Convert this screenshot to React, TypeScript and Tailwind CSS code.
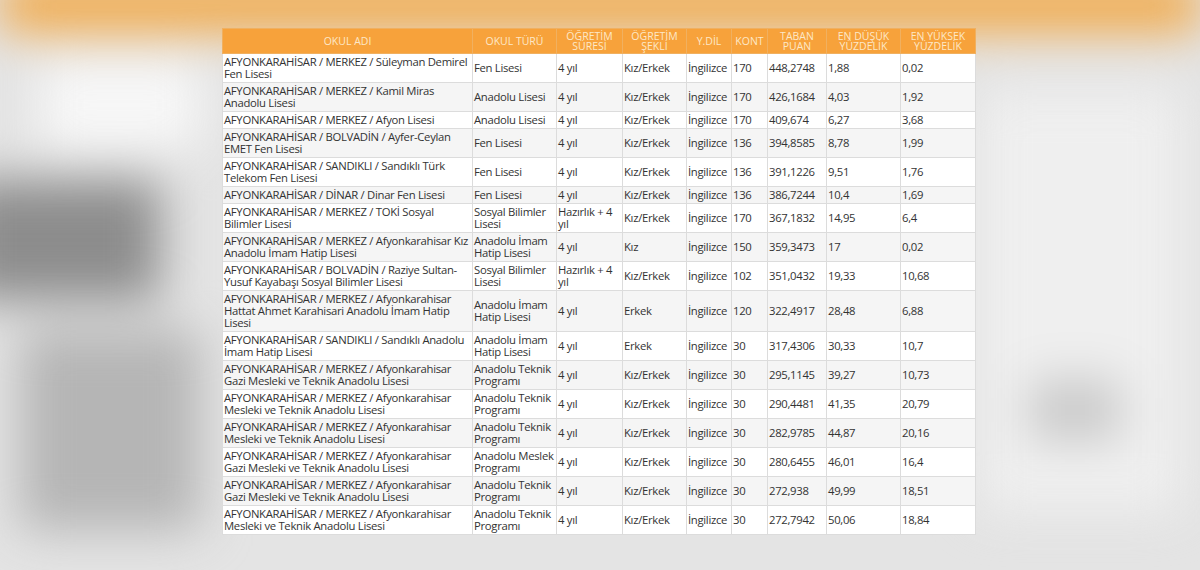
const rows: string[][] = [
  ["AFYONKARAHİSAR / MERKEZ / Süleyman Demirel Fen Lisesi", "Fen Lisesi", "4 yıl", "Kız/Erkek", "İngilizce", "170", "448,2748", "1,88", "0,02"],
  ["AFYONKARAHİSAR / MERKEZ / Kamil Miras Anadolu Lisesi", "Anadolu Lisesi", "4 yıl", "Kız/Erkek", "İngilizce", "170", "426,1684", "4,03", "1,92"],
  ["AFYONKARAHİSAR / MERKEZ / Afyon Lisesi", "Anadolu Lisesi", "4 yıl", "Kız/Erkek", "İngilizce", "170", "409,674", "6,27", "3,68"],
  ["AFYONKARAHİSAR / BOLVADİN / Ayfer-Ceylan EMET Fen Lisesi", "Fen Lisesi", "4 yıl", "Kız/Erkek", "İngilizce", "136", "394,8585", "8,78", "1,99"],
  ["AFYONKARAHİSAR / SANDIKLI / Sandıklı Türk Telekom Fen Lisesi", "Fen Lisesi", "4 yıl", "Kız/Erkek", "İngilizce", "136", "391,1226", "9,51", "1,76"],
  ["AFYONKARAHİSAR / DİNAR / Dinar Fen Lisesi", "Fen Lisesi", "4 yıl", "Kız/Erkek", "İngilizce", "136", "386,7244", "10,4", "1,69"],
  ["AFYONKARAHİSAR / MERKEZ / TOKİ Sosyal Bilimler Lisesi", "Sosyal Bilimler Lisesi", "Hazırlık + 4 yıl", "Kız/Erkek", "İngilizce", "170", "367,1832", "14,95", "6,4"],
  ["AFYONKARAHİSAR / MERKEZ / Afyonkarahisar Kız Anadolu İmam Hatip Lisesi", "Anadolu İmam Hatip Lisesi", "4 yıl", "Kız", "İngilizce", "150", "359,3473", "17", "0,02"],
  ["AFYONKARAHİSAR / BOLVADİN / Raziye Sultan-Yusuf Kayabaşı Sosyal Bilimler Lisesi", "Sosyal Bilimler Lisesi", "Hazırlık + 4 yıl", "Kız/Erkek", "İngilizce", "102", "351,0432", "19,33", "10,68"],
  ["AFYONKARAHİSAR / MERKEZ / Afyonkarahisar Hattat Ahmet Karahisari Anadolu İmam Hatip Lisesi", "Anadolu İmam Hatip Lisesi", "4 yıl", "Erkek", "İngilizce", "120", "322,4917", "28,48", "6,88"],
  ["AFYONKARAHİSAR / SANDIKLI / Sandıklı Anadolu İmam Hatip Lisesi", "Anadolu İmam Hatip Lisesi", "4 yıl", "Erkek", "İngilizce", "30", "317,4306", "30,33", "10,7"],
  ["AFYONKARAHİSAR / MERKEZ / Afyonkarahisar Gazi Mesleki ve Teknik Anadolu Lisesi", "Anadolu Teknik Programı", "4 yıl", "Kız/Erkek", "İngilizce", "30", "295,1145", "39,27", "10,73"],
  ["AFYONKARAHİSAR / MERKEZ / Afyonkarahisar Mesleki ve Teknik Anadolu Lisesi", "Anadolu Teknik Programı", "4 yıl", "Kız/Erkek", "İngilizce", "30", "290,4481", "41,35", "20,79"],
  ["AFYONKARAHİSAR / MERKEZ / Afyonkarahisar Mesleki ve Teknik Anadolu Lisesi", "Anadolu Teknik Programı", "4 yıl", "Kız/Erkek", "İngilizce", "30", "282,9785", "44,87", "20,16"],
  ["AFYONKARAHİSAR / MERKEZ / Afyonkarahisar Gazi Mesleki ve Teknik Anadolu Lisesi", "Anadolu Meslek Programı", "4 yıl", "Kız/Erkek", "İngilizce", "30", "280,6455", "46,01", "16,4"],
  ["AFYONKARAHİSAR / MERKEZ / Afyonkarahisar Gazi Mesleki ve Teknik Anadolu Lisesi", "Anadolu Teknik Programı", "4 yıl", "Kız/Erkek", "İngilizce", "30", "272,938", "49,99", "18,51"],
  ["AFYONKARAHİSAR / MERKEZ / Afyonkarahisar Mesleki ve Teknik Anadolu Lisesi", "Anadolu Teknik Programı", "4 yıl", "Kız/Erkek", "İngilizce", "30", "272,7942", "50,06", "18,84"],
];

const heads = ["OKUL ADI", "OKUL TÜRÜ", "ÖĞRETİM SÜRESİ", "ÖĞRETİM ŞEKLİ", "Y.DİL", "KONT", "TABAN PUAN", "EN DÜŞÜK YÜZDELİK", "EN YÜKSEK YÜZDELİK"];
const widths = [250, 84, 66, 64, 45, 36, 59, 74, 75];

export default function App() {
  return (
    <div className="relative w-[1200px] h-[570px] overflow-hidden bg-[#e4e4e4]" style={{ fontFamily: '"Open Sans", "DejaVu Sans", sans-serif' }}>
      {/* blurred backdrop */}
      <div className="absolute inset-0 blur-xl">
        <div className="absolute left-0 top-[-20px] w-[1200px] h-[50px] bg-[#f2a640]" />
        <div className="absolute left-[-40px] top-[180px] w-[200px] h-[120px] bg-[#8c8c8c]" />
        <div className="absolute left-[20px] top-[330px] w-[180px] h-[200px] bg-[#b5b5b5]" />
        <div className="absolute left-[40px] top-[60px] w-[160px] h-[90px] bg-[#f7f7f7]" />
        <div className="absolute right-[20px] top-[90px] w-[200px] h-[420px] bg-[#efefef]" />
        <div className="absolute right-[80px] top-[380px] w-[90px] h-[60px] bg-[#c8c8c8]" />
      </div>
      <div className="relative pt-[28px] pl-[222px]">
        <table className="w-[753px] border-collapse text-[11.3px] leading-[12px] text-[#333] table-fixed bg-white">
          <colgroup>
            {widths.map((w, i) => <col key={i} style={{ width: w }} />)}
          </colgroup>
          <thead>
            <tr className="bg-[#f7a23b]">
              {heads.map((h, i) => (
                <th key={i} className="h-[25px] px-[1px] text-center align-middle font-normal text-[10.5px] leading-[10px] text-[#fde8c8] border border-[#f0b060]">{h}</th>
              ))}
            </tr>
          </thead>
          <tbody>
            {rows.map((r, ri) => (
              <tr key={ri} className={ri % 2 ? "bg-[#f5f5f5]" : "bg-white"}>
                {r.map((c, ci) => (
                  <td key={ci} className="border border-[#dcdcdc] px-[1px] py-[2px] align-middle tracking-[-0.3px]">{c}</td>
                ))}
              </tr>
            ))}
          </tbody>
        </table>
      </div>
    </div>
  );
}
